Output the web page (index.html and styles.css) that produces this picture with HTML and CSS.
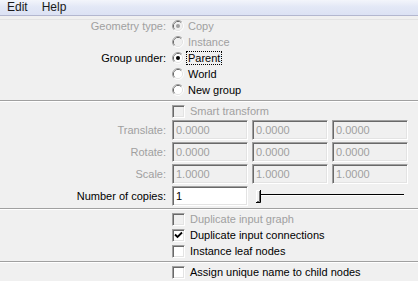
FILE: index.html
```html
<!DOCTYPE html>
<html>
<head>
<meta charset="utf-8">
<link rel="stylesheet" href="styles.css">
</head>
<body>
<div class="menubar"><span class="mi">Edit</span><span class="mi">Help</span></div>
<div class="topline"></div>
<div class="form">
  <div class="row r16">
    <div class="label dis">Geometry type:</div>
    <div class="ctrl"><svg class="radio" viewBox="0 0 12 12"><path d="M2.11 9.89A5.5 5.5 0 0 1 9.89 2.11" stroke="#a0a0a0" fill="none"/><path d="M9.89 2.11A5.5 5.5 0 0 1 2.11 9.89" stroke="#fff" fill="none"/><path d="M2.82 9.18A4.5 4.5 0 0 1 9.18 2.82" stroke="#696969" fill="none"/><path d="M9.18 2.82A4.5 4.5 0 0 1 2.82 9.18" stroke="#e3e3e3" fill="none"/><circle cx="6" cy="6" r="4" fill="#f0f0f0"/><circle cx="6" cy="6" r="2" fill="#a0a0a0"/></svg><span class="txt dis">Copy</span></div>
  </div>
  <div class="row r16">
    <div class="label"></div>
    <div class="ctrl"><svg class="radio" viewBox="0 0 12 12"><path d="M2.11 9.89A5.5 5.5 0 0 1 9.89 2.11" stroke="#a0a0a0" fill="none"/><path d="M9.89 2.11A5.5 5.5 0 0 1 2.11 9.89" stroke="#fff" fill="none"/><path d="M2.82 9.18A4.5 4.5 0 0 1 9.18 2.82" stroke="#696969" fill="none"/><path d="M9.18 2.82A4.5 4.5 0 0 1 2.82 9.18" stroke="#e3e3e3" fill="none"/><circle cx="6" cy="6" r="4" fill="#f0f0f0"/></svg><span class="txt dis">Instance</span></div>
  </div>
  <div class="row r16">
    <div class="label">Group under:</div>
    <div class="ctrl"><svg class="radio" viewBox="0 0 12 12"><path d="M2.11 9.89A5.5 5.5 0 0 1 9.89 2.11" stroke="#a0a0a0" fill="none"/><path d="M9.89 2.11A5.5 5.5 0 0 1 2.11 9.89" stroke="#fff" fill="none"/><path d="M2.82 9.18A4.5 4.5 0 0 1 9.18 2.82" stroke="#696969" fill="none"/><path d="M9.18 2.82A4.5 4.5 0 0 1 2.82 9.18" stroke="#e3e3e3" fill="none"/><circle cx="6" cy="6" r="4" fill="#fff"/><circle cx="6" cy="6" r="2" fill="#000"/></svg><span class="txt focus">Parent</span></div>
  </div>
  <div class="row r16">
    <div class="label"></div>
    <div class="ctrl"><svg class="radio" viewBox="0 0 12 12"><path d="M2.11 9.89A5.5 5.5 0 0 1 9.89 2.11" stroke="#a0a0a0" fill="none"/><path d="M9.89 2.11A5.5 5.5 0 0 1 2.11 9.89" stroke="#fff" fill="none"/><path d="M2.82 9.18A4.5 4.5 0 0 1 9.18 2.82" stroke="#696969" fill="none"/><path d="M9.18 2.82A4.5 4.5 0 0 1 2.82 9.18" stroke="#e3e3e3" fill="none"/><circle cx="6" cy="6" r="4" fill="#fff"/></svg><span class="txt">World</span></div>
  </div>
  <div class="row r16">
    <div class="label"></div>
    <div class="ctrl"><svg class="radio" viewBox="0 0 12 12"><path d="M2.11 9.89A5.5 5.5 0 0 1 9.89 2.11" stroke="#a0a0a0" fill="none"/><path d="M9.89 2.11A5.5 5.5 0 0 1 2.11 9.89" stroke="#fff" fill="none"/><path d="M2.82 9.18A4.5 4.5 0 0 1 9.18 2.82" stroke="#696969" fill="none"/><path d="M9.18 2.82A4.5 4.5 0 0 1 2.82 9.18" stroke="#e3e3e3" fill="none"/><circle cx="6" cy="6" r="4" fill="#fff"/></svg><span class="txt">New group</span></div>
  </div>

  <div class="sep s1"></div>

  <div class="row r16">
    <div class="label"></div>
    <div class="ctrl"><span class="cb dis"></span><span class="txt2 dis">Smart transform</span></div>
  </div>
  <div class="row rf first">
    <div class="label dis">Translate:</div>
    <div class="ctrl fields"><span class="fld">0.0000</span><span class="fld">0.0000</span><span class="fld">0.0000</span></div>
  </div>
  <div class="row rf">
    <div class="label dis">Rotate:</div>
    <div class="ctrl fields"><span class="fld">0.0000</span><span class="fld">0.0000</span><span class="fld">0.0000</span></div>
  </div>
  <div class="row rf">
    <div class="label dis">Scale:</div>
    <div class="ctrl fields"><span class="fld">1.0000</span><span class="fld">1.0000</span><span class="fld">1.0000</span></div>
  </div>
  <div class="row rf">
    <div class="label">Number of copies:</div>
    <div class="ctrl"><span class="fld on">1</span><svg class="slider" viewBox="0 0 152 14" width="152" height="14"><line x1="6" y1="5.5" x2="150" y2="5.5" stroke="#000"/><line x1="6" y1="6.5" x2="150" y2="6.5" stroke="#fff"/><path d="M2.5 13.5V1.5H5.5" stroke="#fff" fill="none"/><path d="M6.5 1V13.5H2" stroke="#000" fill="none"/><path d="M5.5 2V12.5H3" stroke="#696969" fill="none"/><rect x="3" y="2" width="2" height="10" fill="#f0f0f0"/></svg></div>
  </div>

  <div class="sep s2"></div>

  <div class="row r16">
    <div class="label"></div>
    <div class="ctrl"><span class="cb dis"></span><span class="txt2 dis">Duplicate input graph</span></div>
  </div>
  <div class="row r16">
    <div class="label"></div>
    <div class="ctrl"><span class="cb"><svg viewBox="0 0 9 9" width="9" height="9"><path d="M1 3.5L3.5 6L8 1.5" stroke="#000" stroke-width="1.8" fill="none"/></svg></span><span class="txt2">Duplicate input connections</span></div>
  </div>
  <div class="row r16">
    <div class="label"></div>
    <div class="ctrl"><span class="cb"></span><span class="txt2">Instance leaf nodes</span></div>
  </div>

  <div class="sep s3"></div>

  <div class="row r16">
    <div class="label"></div>
    <div class="ctrl"><span class="cb"></span><span class="txt2">Assign unique name to child nodes</span></div>
  </div>
</div>
</body>
</html>
```
FILE: styles.css
```css
html, body {
  margin: 0;
  padding: 0;
  background: #f0f0f0;
  width: 418px;
  height: 281px;
  overflow: hidden;
  font-family: "Liberation Sans", Arial, sans-serif;
  font-size: 11px;
  color: #000;
}

.menubar {
  height: 16px;
  box-sizing: border-box;
  border-bottom: 1px solid #b3b7cf;
  background: linear-gradient(#f3f5fb, #e3e8f6 45%, #dce2f4);
  display: flex;
  font-size: 12px;
  line-height: 15px;
  color: #1a1a1a;
  padding-left: 7px;
  gap: 14px;
}

.topline {
  height: 1px;
  margin-top: 3px;
  background: #e3e3e3;
}

.form {
  margin-top: -2px;
  display: flex;
  flex-direction: column;
}

.row {
  display: grid;
  grid-template-columns: 166px 1fr;
  column-gap: 6px;
  align-items: center;
}

.r16 { height: 16px; }
.rf { height: 20px; margin-top: 2px; }
.rf.first { margin-top: 1px; }

.label {
  text-align: right;
  white-space: nowrap;
}

.dis { color: #a0a0a0; }

.ctrl {
  display: flex;
  align-items: center;
  white-space: nowrap;
}

.radio {
  width: 12px;
  height: 12px;
  flex: none;
}

.txt { margin-left: 4px; }
.txt2 { margin-left: 5px; }

.focus {
  outline: 1px dotted #000;
  outline-offset: 0;
  padding: 0 1px;
  margin-left: 3px;
}

.sep {
  height: 1px;
  border-bottom: 1px solid #fff;
  background: #a0a0a0;
}
.s1 { margin: 2px 0 1px; }
.s2 { margin: 2px 0 1px; }
.s3 { margin: 2px 0 1px; }

.cb {
  width: 13px;
  height: 13px;
  flex: none;
  box-sizing: border-box;
  border: 1px solid;
  border-color: #a0a0a0 #fff #fff #a0a0a0;
  box-shadow: inset 1px 1px #696969, inset -1px -1px #e3e3e3;
  background: #fff;
  display: flex;
  align-items: center;
  justify-content: center;
}
.cb.dis { background: #f0f0f0; }
.cb svg { display: block; }

.fields { gap: 4px; }

.fld {
  width: 76px;
  height: 20px;
  box-sizing: border-box;
  border: 1px solid;
  border-color: #a0a0a0 #fff #fff #a0a0a0;
  box-shadow: inset 1px 1px #696969, inset -1px -1px #e3e3e3;
  background: #f0f0f0;
  color: #a0a0a0;
  padding-left: 3px;
  line-height: 18px;
  flex: none;
}
.fld.on {
  width: 76px;
  background: #fff;
  color: #000;
}

.slider {
  margin-left: 6px;
  display: block;
  flex: none;
}
```
